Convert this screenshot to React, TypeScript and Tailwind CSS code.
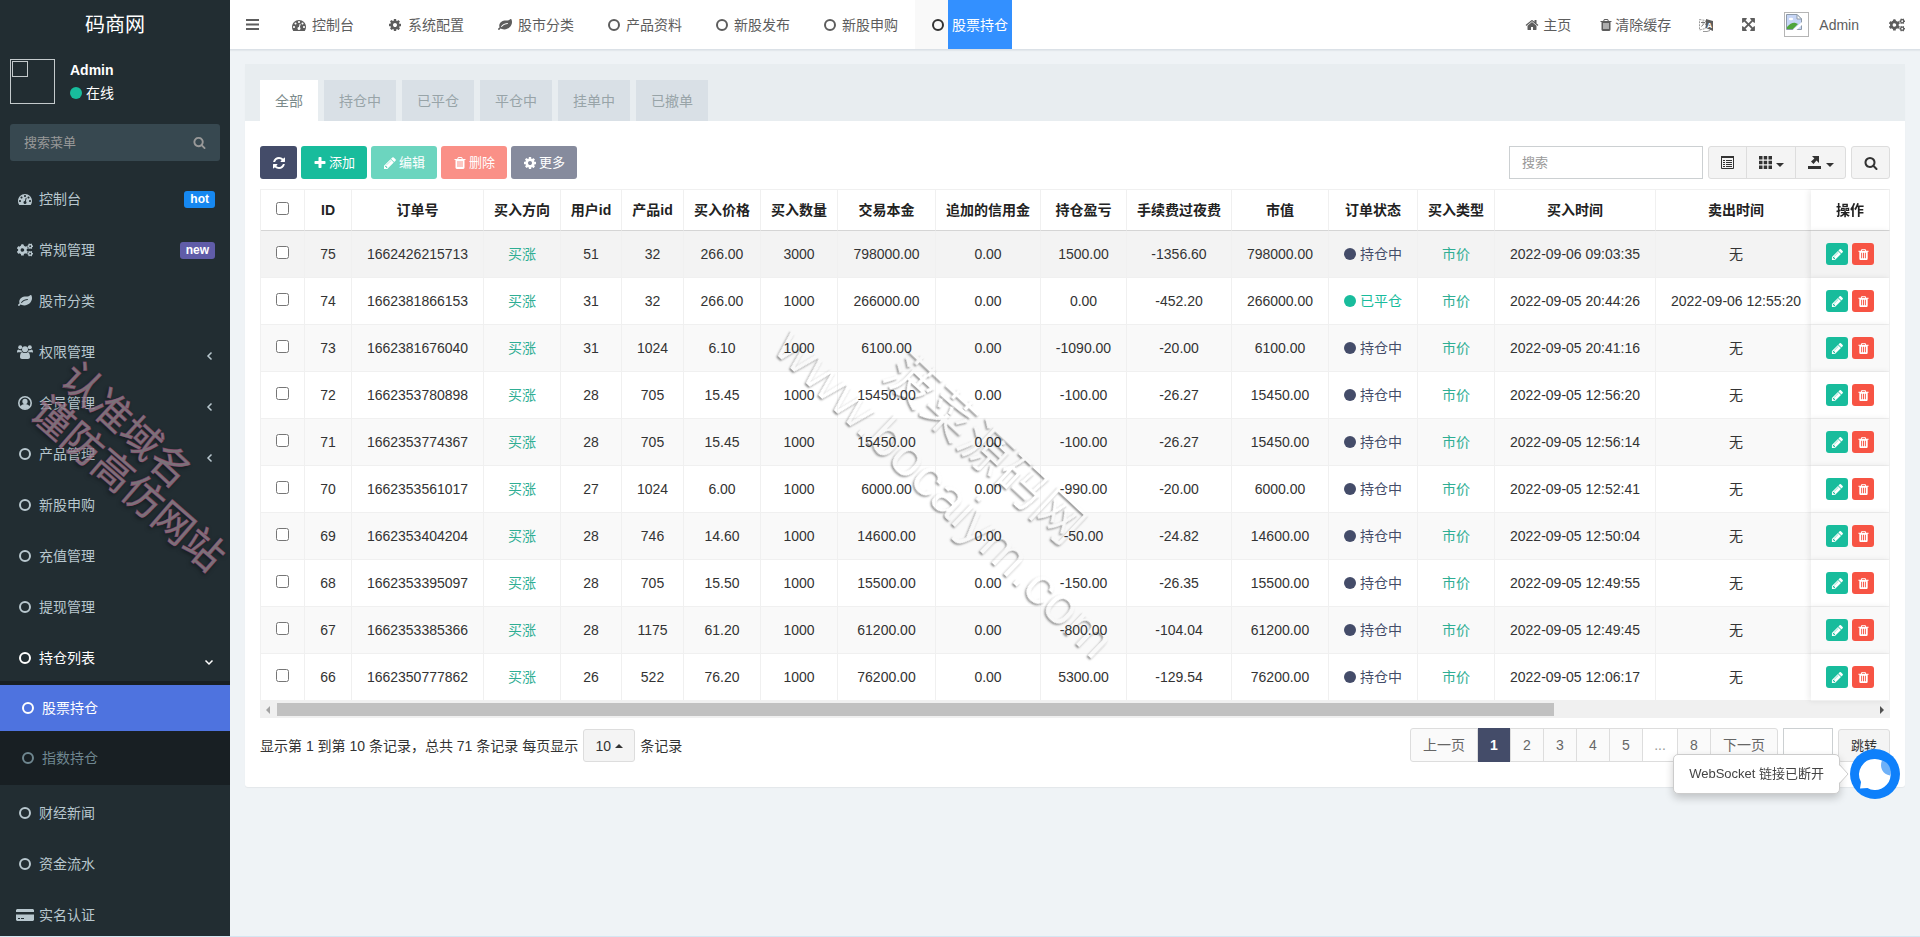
import React from 'react';
import { FaCogs } from 'react-icons/fa';

const paths = {
  dashboard:
    'M384 1152q0-53-37.5-90.5t-90.5-37.5-90.5 37.5-37.5 90.5 37.5 90.5 90.5 37.5 90.5-37.5 37.5-90.5zm192-448q0-53-37.5-90.5t-90.5-37.5-90.5 37.5-37.5 90.5 37.5 90.5 90.5 37.5 90.5-37.5 37.5-90.5zm428 481l101-382q6-26-7.5-48.5t-38.5-29.5-48 6.5-30 39.5l-101 382q-60 5-107 43.5t-63 98.5q-20 77 20 146t117 89 146-20 89-117q16-60-6-117t-72-91zm660-33q0-53-37.5-90.5t-90.5-37.5-90.5 37.5-37.5 90.5 37.5 90.5 90.5 37.5 90.5-37.5 37.5-90.5zm-640-640q0-53-37.5-90.5t-90.5-37.5-90.5 37.5-37.5 90.5 37.5 90.5 90.5 37.5 90.5-37.5 37.5-90.5zm448 192q0-53-37.5-90.5t-90.5-37.5-90.5 37.5-37.5 90.5 37.5 90.5 90.5 37.5 90.5-37.5 37.5-90.5zm320 448q0 261-141 483-19 29-54 29h-1402q-35 0-54-29-141-221-141-483 0-182 71-348t191-286 286-191 348-71 348 71 286 191 191 286 71 348z',
  leaf: 'M1280 704q0-26-19-45t-45-19q-172 0-318 49.5t-259.5 134-235.5 219.5q-19 21-19 45 0 26 19 45t45 19q24 0 45-19 27-24 74-71t67-66q137-124 268.5-176t313.5-52q26 0 45-19t19-45zm512-198q0 95-20 193-46 224-184.5 383t-357.5 268q-214 108-438 108-148 0-286-47-15-5-88-42t-96-37q-16 0-39.5 32t-45 70-52.5 70-60 32q-43 0-63.5-17.5t-45.5-59.5q-2-4-6-11t-5.5-10-3-9.5-1.5-13.5q0-35 31-73.5t68-65.5 68-56 31-48q0-4-14-38t-16-44q-9-51-9-104 0-115 43.5-220t119-184.5 170.5-139 204-95.5q55-18 145-25.5t179.5-9 178.5-6 163.5-24 113.5-56.5l29.5-29.5 29.5-28 27-20 36.5-16 43.5-4.5q39 0 70.5 46t47.5 112 24 124 8 96z',
  cog: 'M1152 896q0-106-75-181t-181-75-181 75-75 181 75 181 181 75 181-75 75-181zm512-109v222q0 12-8 23t-20 13l-185 28q-19 54-39 91 35 50 107 138 10 12 10 25t-9 23q-27 37-99 108t-94 71q-12 0-26-9l-138-108q-44 23-91 38-16 136-29 186-7 28-36 28h-222q-14 0-24.5-8.5t-11.5-21.5l-28-184q-49-16-90-37l-141 107q-10 9-25 9-14 0-25-11-126-114-165-168-7-10-7-23 0-12 8-23 15-21 51-66.5t54-70.5q-27-50-41-99l-183-27q-13-2-21-12.5t-8-23.5v-222q0-12 8-23t19-13l186-28q14-46 39-92-40-57-107-138-10-12-10-24 0-10 9-23 26-36 98.5-107.5t94.5-71.5q13 0 26 10l138 107q44-23 91-38 16-136 29-186 7-28 36-28h222q14 0 24.5 8.5t11.5 21.5l28 184q49 16 90 37l142-107q9-9 24-9 13 0 25 10 129 119 165 170 7 8 7 22 0 12-8 23-15 21-51 66.5t-54 70.5q26 50 41 98l183 28q13 2 21 12.5t8 23.5z',
  home: 'M1472 992v480q0 26-19 45t-45 19h-384v-384h-256v384h-384q-26 0-45-19t-19-45v-480q0-1 .5-3t.5-3l575-474 575 474q1 2 1 6zm223-69l-62 74q-8 9-21 11h-3q-13 0-21-7l-692-577-692 577q-12 8-24 7-13-2-21-11l-62-74q-8-10-7-23.5t11-21.5l719-599q32-26 76-26t76 26l244 204v-195q0-14 9-23t23-9h192q14 0 23 9t9 23v408l219 182q10 8 11 21.5t-7 23.5z',
  trash:
    'M704 1376v-704q0-14-9-23t-23-9h-64q-14 0-23 9t-9 23v704q0 14 9 23t23 9h64q14 0 23-9t9-23zm256 0v-704q0-14-9-23t-23-9h-64q-14 0-23 9t-9 23v704q0 14 9 23t23 9h64q14 0 23-9t9-23zm256 0v-704q0-14-9-23t-23-9h-64q-14 0-23 9t-9 23v704q0 14 9 23t23 9h64q14 0 23-9t9-23zm-544-992h448l-48-117q-7-9-17-11h-317q-10 2-17 11zm928 32v64q0 14-9 23t-23 9h-96v948q0 83-47 143.5t-113 60.5h-832q-66 0-113-58.5t-47-141.5v-952h-96q-14 0-23-9t-9-23v-64q0-14 9-23t23-9h309l70-167q15-37 54-63t79-26h320q40 0 79 26t54 63l70 167h309q14 0 23 9t9 23z',
  refresh:
    'M1639 1056q0 5-1 7-64 268-268 434.5t-478 166.5q-146 0-282.5-55t-243.5-157l-129 129q-19 19-45 19t-45-19-19-45v-448q0-26 19-45t45-19h448q26 0 45 19t19 45-19 45l-137 137q71 66 161 102t187 36q134 0 250-65t186-179q11-17 53-117 8-23 30-23h192q13 0 22.5 9.5t9.5 22.5zm25-800v448q0 26-19 45t-45 19h-448q-26 0-45-19t-19-45 19-45l138-138q-148-137-349-137-134 0-250 65t-186 179q-11 17-53 117-8 23-30 23h-199q-13 0-22.5-9.5t-9.5-22.5v-7q65-268 270-434.5t480-166.5q146 0 284 55.5t245 156.5l130-129q19-19 45-19t45 19 19 45z',
  plus: 'M1600 736v192q0 40-28 68t-68 28h-416v416q0 40-28 68t-68 28h-192q-40 0-68-28t-28-68v-416h-416q-40 0-68-28t-28-68v-192q0-40 28-68t68-28h416v-416q0-40 28-68t68-28h192q40 0 68 28t28 68v416h416q40 0 68 28t28 68z',
  pencil:
    'M491 1536l91-91-235-235-91 91v107h128v128h107zm523-928q0-22-22-22-10 0-17 7l-542 542q-7 7-7 17 0 22 22 22 10 0 17-7l542-542q7-7 7-17zm-54-192l416 416-832 832h-416v-416zm683 96q0 53-37 90l-166 166-416-416 166-165q36-38 90-38 53 0 91 38l235 234q37 39 37 91z',
  search:
    'M1216 832q0-185-131.5-316.5t-316.5-131.5-316.5 131.5-131.5 316.5 131.5 316.5 316.5 131.5 316.5-131.5 131.5-316.5zm512 832q0 52-38 90t-90 38q-54 0-90-38l-343-342q-179 124-399 124-143 0-273.5-55.5t-225-150-150-225-55.5-273.5 55.5-273.5 150-225 225-150 273.5-55.5 273.5 55.5 225 150 150 225 55.5 273.5q0 220-124 399l343 343q37 37 37 90z',
  expand:
    'M1411 541l-355 355 355 355 144-144q29-31 70-14 39 17 39 59v448q0 26-19 45t-45 19h-448q-42 0-59-40-17-39 14-69l144-144-355-355-355 355 144 144q31 30 14 69-17 40-59 40h-448q-26 0-45-19t-19-45v-448q0-42 40-59 39-17 69 14l144 144 355-355-355-355-144 144q-19 19-45 19-12 0-24-5-40-17-40-59v-448q0-26 19-45t45-19h448q42 0 59 40 17 39-14 69l-144 144 355 355 355-355-144-144q-31-30-14-69 17-40 59-40h448q26 0 45 19t19 45v448q0 42-39 59-13 5-25 5-26 0-45-19z',
};

type IconName = keyof typeof paths | 'circle' | 'cogs' | 'users' | 'user' | 'card';

function Icon({ name, className = 'size-[14px]' }: { name: IconName; className?: string }) {
  if (name === 'circle') {
    return (
      <svg viewBox="0 0 12 12" className="size-3 shrink-0" fill="none" stroke="currentColor" strokeWidth="2">
        <circle cx="6" cy="6" r="5" />
      </svg>
    );
  }
  if (name === 'cogs') return <FaCogs className="size-4 shrink-0" />;
  if (name === 'users') {
    return (
      <svg viewBox="0 0 16 14" className="h-[14px] w-4 shrink-0" fill="currentColor">
        <circle cx="3.200" cy="2.300" r="2" />
        <circle cx="12.800" cy="2.300" r="2" />
        <circle cx="8" cy="4.200" r="3" />
        <path d="M0 7.500C0 5.500.6 4.600 1.500 4.600c1 .7 1.900.6 2.800.3.100 1 .4 1.700 1 2.300H1.500Q0 7.500 0 7.500zM16 7.500c0-2-.6-2.900-1.500-2.900-1 .7-1.900.6-2.800.3-.1 1-.4 1.700-1 2.300h3.800q1.500.3 1.500.3z" />
        <path d="M3 12c0-3 .8-4.800 2.500-4.800 1.600 1.200 3.400 1.200 5 0C12.200 7.200 13 9 13 12c0 1.300-.8 2-2 2H5c-1.200 0-2-.7-2-2z" />
      </svg>
    );
  }
  if (name === 'user') {
    return (
      <svg viewBox="0 0 14 14" className="size-[14px] shrink-0">
        <circle cx="7" cy="7" r="6.2" fill="none" stroke="currentColor" strokeWidth="1.6" />
        <circle cx="7" cy="5.4" r="2.6" fill="currentColor" />
        <path d="M2.6 11C3 8.800 4.600 8 7 8s4 .8 4.400 3c-1 1.300-2.600 2-4.400 2s-3.400-.7-4.400-2z" fill="currentColor" />
      </svg>
    );
  }
  if (name === 'card') {
    return (
      <svg viewBox="0 0 18 12" className="h-3 w-[18px] shrink-0" fill="currentColor">
        <path d="M1 0h16l1 1v2H0V1zM0 5.500h18V11l-1 1H1l-1-1zM2 9v1h2V9zm3 0v1h3V9z" fillRule="evenodd" />
      </svg>
    );
  }
  return (
    <svg viewBox="0 0 1792 1792" className={`${className} shrink-0`} fill="currentColor">
      <path d={paths[name]} />
    </svg>
  );
}

function Chevron({ down }: { down?: boolean }) {
  return (
    <svg viewBox="0 0 10 10" className="mt-2 size-[10px] shrink-0" fill="none" stroke="currentColor" strokeWidth="1.500">
      <path d={down ? 'M1.500 3.500L5 7l3.500-3.500' : 'M6.500 1.500L3 5l3.500 3.500'} />
    </svg>
  );
}

type MenuItem = { icon: IconName; label: string; badge?: string; badgeClass?: string; arrow?: boolean };

const menuTop: MenuItem[] = [
  { icon: 'dashboard', label: '控制台', badge: 'hot', badgeClass: 'bg-[#1688f1]' },
  { icon: 'cogs', label: '常规管理', badge: 'new', badgeClass: 'bg-[#605ca8]' },
  { icon: 'leaf', label: '股市分类' },
  { icon: 'users', label: '权限管理', arrow: true },
  { icon: 'user', label: '会员管理', arrow: true },
  { icon: 'circle', label: '产品管理', arrow: true },
  { icon: 'circle', label: '新股申购' },
  { icon: 'circle', label: '充值管理' },
  { icon: 'circle', label: '提现管理' },
];

const menuBottom: MenuItem[] = [
  { icon: 'circle', label: '财经新闻' },
  { icon: 'circle', label: '资金流水' },
  { icon: 'card', label: '实名认证' },
];

const navTabs: { icon: IconName; label: string }[] = [
  { icon: 'dashboard', label: '控制台' },
  { icon: 'cog', label: '系统配置' },
  { icon: 'leaf', label: '股市分类' },
  { icon: 'circle', label: '产品资料' },
  { icon: 'circle', label: '新股发布' },
  { icon: 'circle', label: '新股申购' },
];

const filters = ['全部', '持仓中', '已平仓', '平仓中', '挂单中', '已撤单'];

const columns: { title: string; width: string }[] = [
  { title: 'ID', width: 'w-[47px]' },
  { title: '订单号', width: 'w-[132px]' },
  { title: '买入方向', width: 'w-[77px]' },
  { title: '用户id', width: 'w-[61px]' },
  { title: '产品id', width: 'w-[62px]' },
  { title: '买入价格', width: 'w-[77px]' },
  { title: '买入数量', width: 'w-[77px]' },
  { title: '交易本金', width: 'w-[98px]' },
  { title: '追加的信用金', width: 'w-[105px]' },
  { title: '持仓盈亏', width: 'w-[86px]' },
  { title: '手续费过夜费', width: 'w-[105px]' },
  { title: '市值', width: 'w-[97px]' },
  { title: '订单状态', width: 'w-[89px]' },
  { title: '买入类型', width: 'w-[77px]' },
  { title: '买入时间', width: 'w-[161px]' },
  { title: '卖出时间', width: 'w-[161px]' },
];

// id, order, user, product, price, count, principal, profit, fee, buy time, sell time
const orders = [
  ['75', '1662426215713', '51', '32', '266.00', '3000', '798000.00', '1500.00', '-1356.60', '2022-09-06 09:03:35', ''],
  ['74', '1662381866153', '31', '32', '266.00', '1000', '266000.00', '0.00', '-452.20', '2022-09-05 20:44:26', '2022-09-06 12:55:20'],
  ['73', '1662381676040', '31', '1024', '6.10', '1000', '6100.00', '-1090.00', '-20.00', '2022-09-05 20:41:16', ''],
  ['72', '1662353780898', '28', '705', '15.45', '1000', '15450.00', '-100.00', '-26.27', '2022-09-05 12:56:20', ''],
  ['71', '1662353774367', '28', '705', '15.45', '1000', '15450.00', '-100.00', '-26.27', '2022-09-05 12:56:14', ''],
  ['70', '1662353561017', '27', '1024', '6.00', '1000', '6000.00', '-990.00', '-20.00', '2022-09-05 12:52:41', ''],
  ['69', '1662353404204', '28', '746', '14.60', '1000', '14600.00', '-50.00', '-24.82', '2022-09-05 12:50:04', ''],
  ['68', '1662353395097', '28', '705', '15.50', '1000', '15500.00', '-150.00', '-26.35', '2022-09-05 12:49:55', ''],
  ['67', '1662353385366', '28', '1175', '61.20', '1000', '61200.00', '-800.00', '-104.04', '2022-09-05 12:49:45', ''],
  ['66', '1662350777862', '26', '522', '76.20', '1000', '76200.00', '5300.00', '-129.54', '2022-09-05 12:06:17', ''],
];

function MenuLink({ item }: { item: MenuItem }) {
  return (
    <li>
      <a href="#" className="flex h-[46px] items-center pr-[15px] text-[#b8c7ce]">
        <span className="ml-4 flex w-[18px] justify-center">
          <Icon name={item.icon} />
        </span>
        <span className="ml-[5px] flex-1">{item.label}</span>
        {item.badge && (
          <span className={`rounded-[3px] px-[6px] text-[12px] leading-[17px] font-bold text-white ${item.badgeClass}`}>{item.badge}</span>
        )}
        {item.arrow && <Chevron />}
      </a>
    </li>
  );
}

function Sidebar() {
  return (
    <aside className="relative w-[230px] shrink-0 overflow-hidden bg-[#222d32]">
      <div className="flex h-[50px] items-center justify-center text-[20px] text-white">码商网</div>

      {/* User panel */}
      <div className="flex gap-[15px] px-[10px] pt-[9px]">
        <div className="size-[45px] border border-[#c4cacc] p-px">
          <div className="size-4 border border-[#c4cacc]"></div>
        </div>
        <div className="text-white">
          <p className="leading-[23px] font-bold">Admin</p>
          <p className="flex items-center gap-1 leading-[22px]">
            <span className="size-3 rounded-full bg-[#18bc9c]"></span>在线
          </p>
        </div>
      </div>

      <form className="mx-[10px] mt-5 flex h-[37px] items-center rounded-[3px] bg-[#374850] px-[14px]">
        <input
          type="text"
          aria-label="搜索菜单"
          placeholder="搜索菜单"
          className="min-w-0 flex-1 bg-transparent text-[13px] text-[#999] outline-none placeholder:text-[#999]"
        />
        <button type="button" aria-label="搜索" className="text-[#999]">
          <Icon name="search" className="size-[13px]" />
        </button>
      </form>

      <ul className="mt-[15px] flex flex-col gap-[5px]">
        {menuTop.map((item) => (
          <MenuLink key={item.label} item={item} />
        ))}
        <li>
          <a href="#" className="flex h-[46px] items-center pr-4 text-white">
            <span className="ml-4 flex w-[18px] justify-center">
              <Icon name="circle" />
            </span>
            <span className="ml-[5px] flex-1">持仓列表</span>
            <Chevron down />
          </a>
          <ul className="flex flex-col gap-1 bg-[#181f23] py-1">
            <li>
              <a href="#" className="flex h-[46px] items-center gap-2 bg-[#4e73df] pl-[22px] text-white">
                <Icon name="circle" />
                股票持仓
              </a>
            </li>
            <li>
              <a href="#" className="flex h-[46px] items-center gap-2 pl-[22px] text-[#6f8790]">
                <Icon name="circle" />
                指数持仓
              </a>
            </li>
          </ul>
        </li>
        {menuBottom.map((item) => (
          <MenuLink key={item.label} item={item} />
        ))}
      </ul>

      {/* Stamp */}
      <div className="pointer-events-none absolute top-[425px] left-[126px] -translate-x-1/2 -translate-y-1/2 rotate-[43deg] text-[40px] leading-none whitespace-nowrap text-[#9a8e96]/75 [-webkit-text-stroke:1px_#a0567d99] [text-shadow:0_2px_4px_#00000080]">
        认准域名
      </div>
      <div className="pointer-events-none absolute top-[484px] left-[128px] -translate-x-1/2 -translate-y-1/2 rotate-[41deg] text-[40px] leading-none whitespace-nowrap text-[#9a8e96]/75 [-webkit-text-stroke:1px_#a0567d99] [text-shadow:0_2px_4px_#00000080]">
        谨防高仿网站
      </div>
    </aside>
  );
}

function BrokenImage() {
  return (
    <span className="block size-[25px] border border-[#b5b5b5] p-px">
      <svg viewBox="0 0 16 16" className="size-4">
        <path d="M.5.5H11L15.500 5v10.500H.5z" fill="#c6d5f6" stroke="#8d9aa8" />
        <path d="M11 .5V5h4.500z" fill="#fff" stroke="#8d9aa8" />
        <ellipse cx="5" cy="5" rx="2.200" ry="1.300" fill="#fff" />
        <path d="M1 15v-2c3-4 7-5 8.500-4L12 10l-5 5z" fill="#4fa53c" />
        <path d="M6.500 16l9.500-8v3l-5.500 5z" fill="#fff" />
      </svg>
    </span>
  );
}

function Header() {
  return (
    <header className="flex h-[50px] items-stretch justify-between border-b border-[#dbe1e7] bg-white text-[#5d5d5d] shadow-[0_1px_1px_#e3e8ec]">
      <nav className="flex">
        <button type="button" aria-label="菜单" className="flex w-[45px] items-center pl-4">
          <svg viewBox="0 0 13 11" className="h-[11px] w-[13px]" fill="currentColor">
            <path d="M0 0h13v2H0zM0 4.500h13v2H0zM0 9h13v2H0z" />
          </svg>
        </button>
        {navTabs.map((tab) => (
          <a key={tab.label} href="#" className="flex items-center gap-[6px] px-[17px]">
            <Icon name={tab.icon} />
            {tab.label}
          </a>
        ))}
        <a href="#" className="flex items-stretch bg-[#f9f9f9] pl-[17px] text-[#333]">
          <span className="mr-1 flex items-center">
            <Icon name="circle" />
          </span>
          <span className="flex items-center bg-[#3390ff] px-1 text-white">股票持仓</span>
        </a>
      </nav>
      <div className="flex items-center gap-7 pr-[15px]">
        <a href="#" className="flex items-center gap-1">
          <Icon name="home" />
          主页
        </a>
        <a href="#" className="flex items-center gap-[2px]">
          <Icon name="trash" />
          清除缓存
        </a>
        <a href="#" aria-label="语言">
          <svg viewBox="0 0 14 14" className="size-[14px]">
            <path d="M.5 1.500l6 1v8l-6 1.500z" fill="none" stroke="#999" strokeDasharray="2 1" />
            <path d="M2 4.500h4M4 3.500v2M2.500 8.500l2.500-3" fill="none" stroke="#777" />
            <path d="M7 1l7 2v10l-7-3z" fill="#5d5d5d" />
            <path d="M4 13.500h4l3-1" fill="none" stroke="#999" />
            <text x="8" y="10" fontSize="7" fontWeight="bold" fill="#fff">
              A
            </text>
          </svg>
        </a>
        <a href="#" aria-label="全屏">
          <Icon name="expand" className="size-[15px]" />
        </a>
        <a href="#" className="flex items-center gap-[10px] pr-[2px]">
          <BrokenImage />
          Admin
        </a>
        <a href="#" aria-label="设置">
          <Icon name="cogs" />
        </a>
      </div>
    </header>
  );
}

function Caret({ up }: { up?: boolean }) {
  return (
    <svg viewBox="0 0 8 4" className="h-1 w-2" fill="currentColor">
      <path d={up ? 'M0 4l4-4 4 4z' : 'M0 0h8l-4 4z'} />
    </svg>
  );
}

function Toolbar() {
  return (
    <div className="flex justify-between">
      <div className="flex gap-1 text-[13px] text-white">
        <button type="button" aria-label="刷新" className="flex h-[33px] w-[37px] items-center justify-center rounded-[3px] bg-[#444c69]">
          <Icon name="refresh" />
        </button>
        <button type="button" className="flex h-[33px] items-center gap-[2px] rounded-[3px] bg-[#18bc9c] px-3">
          <Icon name="plus" />
          添加
        </button>
        <button type="button" className="flex h-[33px] items-center gap-[2px] rounded-[3px] bg-[#6cd5bf] px-3">
          <Icon name="pencil" />
          编辑
        </button>
        <button type="button" className="flex h-[33px] items-center gap-[2px] rounded-[3px] bg-[#fa9087] px-3">
          <Icon name="trash" />
          删除
        </button>
        <button type="button" className="flex h-[33px] items-center gap-[2px] rounded-[3px] bg-[#868b9d] px-3">
          <Icon name="cog" />
          更多
        </button>
      </div>
      <div className="flex gap-[5px] text-[#333]">
        <input
          type="text"
          aria-label="搜索"
          placeholder="搜索"
          className="h-[33px] w-[194px] border border-[#ccd0d2] px-3 text-[13px] outline-none placeholder:text-[#999]"
        />
        <div className="flex h-[33px] divide-x divide-[#ddd] rounded-[3px] border border-[#ddd] bg-[#f4f4f4]">
          <button type="button" aria-label="切换视图" className="flex w-[38px] items-center justify-center">
            <svg viewBox="0 0 13 13" className="size-[13px]">
              <path d="M.5.5h12v12H.5z" fill="none" stroke="currentColor" />
              <path d="M0 0h13v2H0z" fill="currentColor" />
              <path d="M2 4.500h2M5 4.500h6M2 6.500h2M5 6.500h6M2 8.500h2M5 8.500h6M2 10.500h2M5 10.500h6" stroke="currentColor" />
            </svg>
          </button>
          <button type="button" aria-label="列" className="flex w-[49px] items-center justify-center gap-1">
            <svg viewBox="0 0 13 13" className="size-[13px]" fill="currentColor">
              <path d="M0 0h3.500v3.500H0zM4.700 0h3.500v3.500H4.700zM9.500 0H13v3.500H9.500zM0 4.700h3.500v3.500H0zM4.700 4.700h3.500v3.500H4.700zM9.500 4.700H13v3.500H9.500zM0 9.500h3.500V13H0zM4.700 9.500h3.500V13H4.700zM9.500 9.500H13V13H9.500z" />
            </svg>
            <span className="mt-1">
              <Caret />
            </span>
          </button>
          <button type="button" aria-label="导出" className="flex w-[49px] items-center justify-center gap-[5px]">
            <svg viewBox="0 0 13 13" className="size-[13px]" fill="currentColor">
              <path d="M4 0h7v7L8.500 4.600 5.500 8 3 5.500l3.400-3zM0 10h13v3H0z" />
            </svg>
            <span className="mt-1">
              <Caret />
            </span>
          </button>
        </div>
        <button type="button" aria-label="搜索" className="flex h-[33px] w-[39px] items-center justify-center rounded-[3px] border border-[#ddd] bg-[#f4f4f4]">
          <Icon name="search" />
        </button>
      </div>
    </div>
  );
}

function OrderTable() {
  const cell = 'border-r border-b border-[#f0f0f0] whitespace-nowrap';
  return (
    <div className="mt-[10px] overflow-hidden">
      <table className="w-full min-w-[1635px] table-fixed border-separate border-spacing-0 border-t border-l border-[#f0f0f0] text-center text-[#333]">
        <thead>
          <tr className="h-[41px]">
            <th className="w-[44px] border-r border-b border-[#f0f0f0] border-b-[#d5d5d5]">
              <input type="checkbox" aria-label="全选" className="mb-[5px] size-[13px] align-middle" />
            </th>
            {columns.map((c) => (
              <th key={c.title} className={`${c.width} border-r border-b border-[#f0f0f0] border-b-[#d5d5d5] font-bold whitespace-nowrap text-[#222]`}>
                {c.title}
              </th>
            ))}
            <th className="sticky right-0 w-[79px] border-r border-b border-[#f0f0f0] border-b-[#d5d5d5] bg-white font-bold text-[#222] shadow-[-2px_0_6px_#00000014]">
              操作
            </th>
          </tr>
        </thead>
        <tbody>
          {orders.map((o, i) => {
            const closed = o[10] !== '';
            const bg = i === 0 ? 'bg-[#f3f3f3]' : i % 2 === 0 ? 'bg-[#f9f9f9]' : 'bg-white';
            return (
              <tr key={o[0]} className={`h-[47px] ${bg}`}>
                <td className={cell}>
                  <input type="checkbox" aria-label={`选择 ${o[0]}`} className="mb-[5px] size-[13px] align-middle" />
                </td>
                <td className={cell}>{o[0]}</td>
                <td className={cell}>{o[1]}</td>
                <td className={`${cell} text-[#2fae94]`}>买涨</td>
                <td className={cell}>{o[2]}</td>
                <td className={cell}>{o[3]}</td>
                <td className={cell}>{o[4]}</td>
                <td className={cell}>{o[5]}</td>
                <td className={cell}>{o[6]}</td>
                <td className={cell}>0.00</td>
                <td className={cell}>{o[7]}</td>
                <td className={cell}>{o[8]}</td>
                <td className={cell}>{o[6]}</td>
                <td className={`${cell} ${closed ? 'text-[#18bc9c]' : 'text-[#444c69]'}`}>
                  <span className="flex items-center justify-center gap-1">
                    <span className="size-3 rounded-full bg-current"></span>
                    {closed ? '已平仓' : '持仓中'}
                  </span>
                </td>
                <td className={`${cell} text-[#2fae94]`}>市价</td>
                <td className={cell}>{o[9]}</td>
                <td className={cell}>{closed ? o[10] : '无'}</td>
                <td className={`${cell} sticky right-0 shadow-[-2px_0_6px_#00000014] ${bg}`}>
                  <span className="flex justify-center gap-1 text-white">
                    <button type="button" aria-label="编辑" className="flex size-[22px] items-center justify-center rounded-[3px] bg-[#18bc9c]">
                      <Icon name="pencil" className="size-[13px]" />
                    </button>
                    <button type="button" aria-label="删除" className="flex size-[22px] items-center justify-center rounded-[3px] bg-[#f75444]">
                      <Icon name="trash" className="size-[13px]" />
                    </button>
                  </span>
                </td>
              </tr>
            );
          })}
        </tbody>
      </table>

      {/* Horizontal scroll track */}
      <div className="flex h-[17px] items-center justify-between bg-[#f0f0f0] px-[6px]">
        <svg viewBox="0 0 4 8" className="h-2 w-1 shrink-0" fill="#a3a3a3">
          <path d="M4 0v8L0 4z" />
        </svg>
        <div className="mx-[7px] flex-1">
          <div className="h-[13px] w-4/5 bg-[#c1c1c1]"></div>
        </div>
        <svg viewBox="0 0 4 8" className="h-2 w-1 shrink-0" fill="#505050">
          <path d="M0 0v8l4-4z" />
        </svg>
      </div>
    </div>
  );
}

function Pagination() {
  return (
    <div className="mt-[10px] flex items-start justify-between">
      <div className="mt-px flex items-center gap-[5px] text-[#333]">
        <span>显示第 1 到第 10 条记录，总共 71 条记录 每页显示</span>
        <button type="button" className="flex h-[33px] w-[52px] items-center justify-center gap-1 rounded-[3px] border border-[#ddd] bg-[#f4f4f4]">
          10 <Caret up />
        </button>
        <span>条记录</span>
      </div>
      <div className="flex gap-[5px] text-[#666]">
        <ul className="flex h-[34px] divide-x divide-[#ddd] rounded-[3px] border border-[#ddd] bg-[#fafafa]">
          <li>
            <a href="#" className="flex h-full items-center px-3">
              上一页
            </a>
          </li>
          <li>
            <a href="#" className="-my-px flex h-[34px] w-8 items-center justify-center bg-[#444c69] font-bold text-white">
              1
            </a>
          </li>
          {['2', '3', '4', '5'].map((p) => (
            <li key={p}>
              <a href="#" className="flex h-full w-8 items-center justify-center">
                {p}
              </a>
            </li>
          ))}
          <li className="flex w-[35px] items-center justify-center bg-white text-[#999]">...</li>
          <li>
            <a href="#" className="flex h-full w-8 items-center justify-center">
              8
            </a>
          </li>
          <li>
            <a href="#" className="flex h-full items-center px-3">
              下一页
            </a>
          </li>
        </ul>
        <input type="text" aria-label="页码" className="h-[34px] w-[50px] border border-[#ccd0d2] outline-none" />
        <button type="button" className="mt-px h-[33px] w-[52px] rounded-[3px] border border-[#ddd] bg-[#f4f4f4] text-[13px] text-[#333]">
          跳转
        </button>
      </div>
    </div>
  );
}

function ChatBubble() {
  return (
    <div className="fixed right-[20px] bottom-[138px] flex items-center">
      <div className="relative mr-[10px] flex h-10 items-center rounded-[5px] border border-[#ccc] bg-white px-[15px] text-[13px] text-[#444] shadow-[0_4px_8px_#00000033]">
        WebSocket 链接已断开
        <svg viewBox="0 0 11 20" className="absolute top-[9px] -right-[10px] h-5 w-[11px]">
          <path d="M0 0l10 10L0 20z" fill="#fff" />
          <path d="M1 0l9 10-9 10" fill="none" stroke="#ccc" />
        </svg>
      </div>
      <button type="button" aria-label="聊天">
        <svg viewBox="0 0 50 50" className="size-[50px]">
          <circle cx="25" cy="25" r="25" fill="#0e80fb" />
          <path d="M25 10a15.500 15.500 0 1 1-7.500 29L10 39.500l1-6.500A15.500 15.500 0 0 1 25 10z" fill="#fff" />
          <path d="M32 11.500c-3 7 1 14 8 15 2-6-1-13-8-15z" fill="#6fb1f8" />
        </svg>
      </button>
    </div>
  );
}

export default function App() {
  return (
    <div className="relative flex h-screen overflow-hidden border-b border-[#d5e6f2] bg-[#eff3f6] font-['Liberation_Sans','Noto_Sans_CJK_SC',sans-serif] text-[14px] leading-5">
      <Sidebar />
      <div className="min-w-0 flex-1">
        <Header />
        <main className="px-[15px] pt-[14px]">
          <div className="rounded-[3px] bg-white shadow-[0_1px_1px_#0000000d]">
            <div className="flex gap-[6px] bg-[#e8edf0] px-[15px] pt-4">
              {filters.map((f, i) => (
                <a
                  key={f}
                  href="#"
                  className={`flex h-[41px] items-center px-[15px] ${i === 0 ? 'bg-white text-[#7b8a8b]' : 'bg-[#d9e0e6] text-[#98a4a8]'}`}
                >
                  {f}
                </a>
              ))}
            </div>
            <div className="px-[15px] pt-[25px] pb-[25px]">
              <Toolbar />
              <OrderTable />
              <Pagination />
            </div>
          </div>
        </main>
      </div>

      {/* Watermark */}
      <div className="pointer-events-none absolute top-[449px] left-[985px] -translate-x-1/2 -translate-y-1/2 rotate-[43deg] text-[50px] leading-none whitespace-nowrap text-white mix-blend-multiply [text-shadow:0_2px_2px_#999]">
        菠菜源码网
      </div>
      <div className="pointer-events-none absolute top-[492px] left-[946px] -translate-x-1/2 -translate-y-1/2 rotate-[44deg] text-[54px] leading-none whitespace-nowrap text-white mix-blend-multiply [text-shadow:0_2px_2px_#999]">
        www.bocaiym.com
      </div>
      <ChatBubble />
    </div>
  );
}
